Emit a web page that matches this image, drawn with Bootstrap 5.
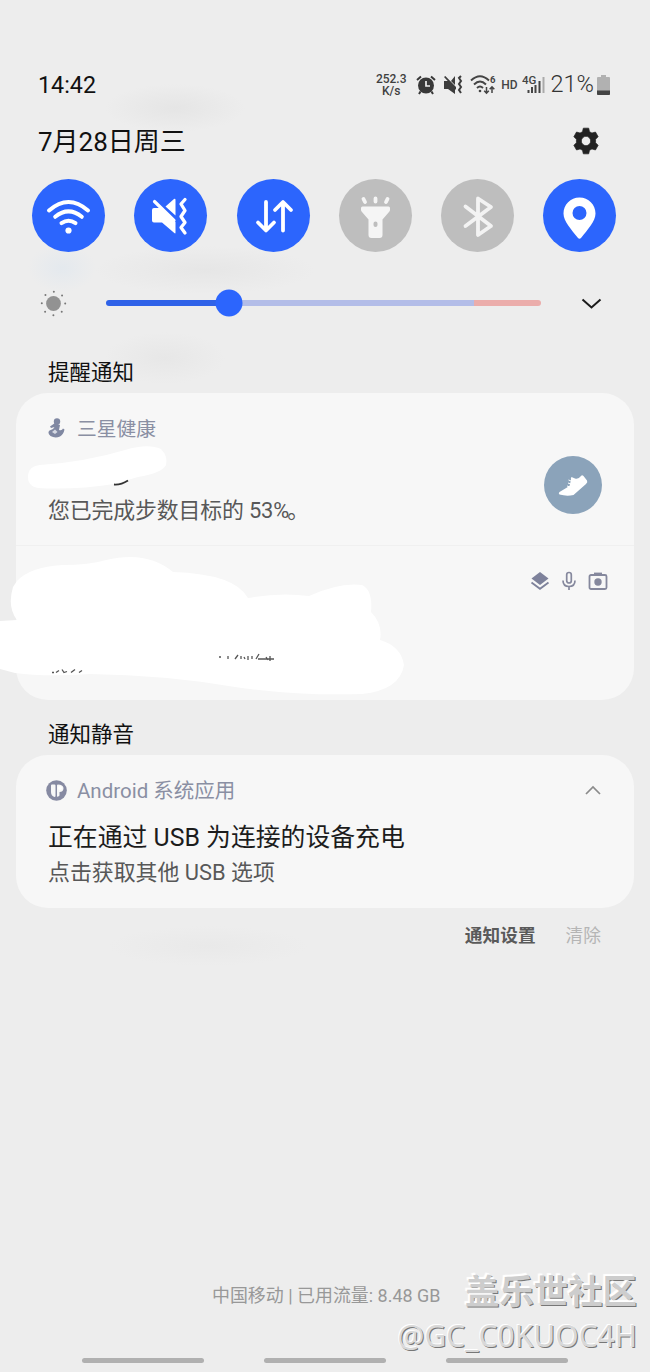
<!DOCTYPE html>
<html lang="zh-CN">
<head>
<meta charset="utf-8">
<meta name="viewport" content="width=device-width, initial-scale=1">
<title>通知面板</title>
<link href="https://cdn.jsdelivr.net/npm/bootstrap@5.3.0/dist/css/bootstrap.min.css" rel="stylesheet">
<style>
body{font-family:Roboto,"Noto Sans CJK SC",sans-serif;background:#ededed;color:#111;line-height:1;white-space:nowrap}
svg{display:block;flex:none}
.shade{width:650px;height:1372px;overflow:hidden;background:
 radial-gradient(ellipse 70px 24px at 175px 108px,#e5e5e5,transparent),
 radial-gradient(ellipse 34px 24px at 62px 268px,#e4e9ee,transparent),
 radial-gradient(ellipse 110px 24px at 205px 270px,#e6e6e6,transparent),
 radial-gradient(ellipse 60px 26px at 165px 358px,#e7e7e7,transparent),
 radial-gradient(ellipse 100px 20px at 208px 946px,#e9e9e9,transparent),#ededed}
.status-row{height:34px;margin-top:68px;padding:0 40px 0 38px}
.clock{font-size:23.3px;padding-top:1px}
.speed{font-size:12px;font-weight:500;line-height:12px;color:#3f3f3f;width:34px;text-align:center}
.hd{font-size:12px;font-weight:500;color:#444}
.pct{font-size:23.5px;font-weight:300;color:#333}
.date-row{height:77px;padding:0 50px 0 38px;font-size:26px}
.toggles{height:73px;padding:0 33.5px 0 32px}
.toggle{width:73px;height:73px;background:#2c65fd;border:0;padding:0}
.toggle.off{background:#bebebe}
.bright-row{height:102px;padding:0 48px 0 40px}
.track{width:435px;height:6px;border-radius:3px;background:linear-gradient(90deg,#2f62e8 123px,#b3bde8 123px 368px,#ebadab 368px)}
.knob{width:27px;height:27px;background:#2c65fd;left:123px;top:50%}
.sect{font-size:21.5px;padding-left:48px}
.panel{margin:0 16px;border-radius:32px;background:#f7f7f7}
.p-one{height:307px}.p-two{height:153px;padding:22px 32px 0}
.row-one{height:153px;padding:22px 32px 0;border-bottom:1px solid #f0f0f0}
.app{color:#8a8fa3;font-size:19.8px;height:26px}
.app-name{padding-top:3px}
.steps{width:58px;height:58px;background:#8ba3ba}
.body-t{font-size:21.9px;color:#585858}
.head-t{font-size:24.85px;color:#1c1c1c}
.scrub{left:-16px;top:0}
.acts{height:54px;padding:3px 49px 0 0;font-size:17.7px}
.foot{margin-top:299px;height:97px}
.carrier{font-size:17.95px;color:#989898;padding:26px 0 0 212px}
.stamp{right:13px;top:7px;text-align:right;color:#d8d8d8;text-shadow:-1px -1px 0 #fff,1px 1px 0 #777}
.stamp-a{font-size:34.4px;font-weight:700;line-height:48px;color:#cdcdcd;text-shadow:-2px -2px 1px #fff,1px 1px 0 #777}
.stamp-b{font-family:"Noto Sans","Noto Sans CJK SC",sans-serif;font-size:30px;line-height:40px}
.grips{padding-left:82px;gap:60px;height:5px}
.grip{width:122px;height:5px;border-radius:3px;background:#b0b0b0}
</style>
</head>
<body>
<main class="shade d-flex flex-column">
 <header class="status-row d-flex align-items-center flex-shrink-0">
  <span class="clock me-auto">14:42</span>
  <span class="speed"><span class="d-block">252.3</span><span class="d-block">K/s</span></span>
  <svg class="ms-2" width="20" height="20" viewBox="0 0 20 20"><path d="M1 5 5 1.5M19 5 15 1.5M4.5 16.5 3 19M15.5 16.5 17 19" stroke="#383838" stroke-width="2"/><circle cx="10" cy="10.5" r="8" fill="#383838"/><path d="M10 6v5h4" fill="none" stroke="#eee" stroke-width="1.7"/></svg>
  <svg style="margin-left:7px" width="20" height="20" viewBox="0 0 20 20" fill="#3c3c3c"><path d="M1 6h4l7 7v6L5 14H1zM12 1v9L8 6zM1 2 2.300 1 13 12v3z"/><path d="m18 1-2 2 2 3-2 3 2 3-2 3 2 3" fill="none" stroke="#3c3c3c" stroke-width="2"/></svg>
  <svg style="margin-left:7px" width="27" height="21" viewBox="0 0 27 21" fill="none" stroke="#444" stroke-width="1.9"><path d="M1 5.500Q10-3 19 5.500M4 9.500q6-6 12 0M7 13q3-3 6 0"/><circle cx="10" cy="16" r="1.300" fill="#444" stroke="none"/><path d="M16.500 12v6m-2.300-2.200 2.300 2.400 2.300-2.400M22 18v-6m-2.300 2.200L22 11.800l2.300 2.400" stroke-width="1.500"/><text x="20" y="8" font-size="9.500" font-weight="700" fill="#444" stroke="none">6</text></svg>
  <span class="hd" style="margin-left:4px">HD</span>
  <svg style="margin-left:4px" width="23" height="22" viewBox="0 0 23 22"><path d="M6.500 19v-3M10 19v-6M13.500 19v-8M17.500 19V7" stroke="#444" stroke-width="2"/><path d="M21.500 19V3" stroke="#aaa" stroke-width="2"/><text x="0" y="9.500" font-size="11.500" font-weight="500" fill="#444">4G</text></svg>
  <span class="pct" style="margin-left:6px">21%</span>
  <svg style="margin-left:3px" width="13" height="20" viewBox="0 0 13 20"><path d="M4 0h5v2h3q1 0 1 1v16q0 1-1 1H1q-1 0-1-1V3q0-1 1-1h3z" fill="#b1b1b1"/><path d="M0 15.500h13V19q0 1-1 1H1q-1 0-1-1z" fill="#444"/></svg>
 </header>
 <div class="date-row d-flex align-items-center justify-content-between flex-shrink-0">
  <span style="padding-top:2px">7月28日周三</span>
  <svg width="28" height="28" viewBox="0 0 24 24" fill="#222"><path fill-rule="evenodd" d="M9.700 1h4.600l.7 3 2.100 1.200 3-.9 2.300 4L20.200 10.500v3l2.200 2.200-2.300 4-3-.9L15 20l-.7 3H9.700L9 20l-2.100-1.200-3 .9-2.300-4 2.200-2.200v-3L1.600 8.300l2.300-4 3 .9L9 4zM12 8a4 4 0 1 0 0 8 4 4 0 0 0 0-8z" stroke="#222" stroke-width=".6" stroke-linejoin="round"/></svg>
 </div>
 <div class="toggles d-flex justify-content-between flex-shrink-0">
  <button class="toggle rounded-circle"><svg width="73" height="73" viewBox="0 0 73 73" fill="none" stroke="#fff" stroke-width="4" stroke-linecap="round"><path d="M17 31.500Q36.500 14.500 56 31.500M23.200 37.800q13.300-10.800 26.600 0M29.500 44.200q7-5 14 0"/><circle cx="36.500" cy="51.500" r="3.100" fill="#fff" stroke="none"/></svg></button>
  <button class="toggle rounded-circle"><svg width="73" height="73" viewBox="0 0 73 73" fill="#fff"><path d="M20 29h7l14.500 14v10.500q0 1.500-1.200.5L28 43.500h-8q-2 0-2-2v-10.500q0-2 2-2zM31.500 27.500l8.500-7.500q1.500-1 1.500 1v15.500z"/><path d="M20.500 22.500 40 41.500" stroke="#fff" stroke-width="3.200" stroke-linecap="round"/><path d="m51 20.500-4 4.500 4 6.500-4 6 4 6-4 5 4 5.500" fill="none" stroke="#fff" stroke-width="3.300" stroke-linecap="round" stroke-linejoin="round"/></svg></button>
  <button class="toggle rounded-circle"><svg width="73" height="73" viewBox="0 0 73 73" fill="none" stroke="#fff" stroke-width="3.800" stroke-linecap="round" stroke-linejoin="round"><path d="M29 23v28M21 43.500l8 8 8-8M46 51.500V23.500M38 31l8-8 8 8"/></svg></button>
  <button class="toggle off rounded-circle"><svg width="73" height="73" viewBox="0 0 73 73" fill="#f5f5f5"><path d="m24.500 20 1.500 3M36.500 19.500v3M48.500 20 47 23" stroke="#f5f5f5" stroke-width="3.800" stroke-linecap="round"/><path fill-rule="evenodd" d="M23.500 27.500h26q1.500 0 1.500 1.500v2q0 1-1 2l-6.500 7.500V56q0 3-3 3h-8q-3 0-3-3V40.500L23 33q-1-1-1-2v-2q0-1.500 1.500-1.500zM36.500 42.500a2 2 0 0 0-2 2v1.500a2 2 0 0 0 4 0v-1.500a2 2 0 0 0-2-2z"/></svg></button>
  <button class="toggle off rounded-circle"><svg width="73" height="73" viewBox="0 0 73 73" fill="none" stroke="#f3f3f3" stroke-width="3.800" stroke-linecap="round" stroke-linejoin="round"><path d="M24.500 27.500 50 47 37 56V19.500l13 8.500-25.500 19"/></svg></button>
  <button class="toggle rounded-circle"><svg width="73" height="73" viewBox="0 0 73 73" fill="#fff"><path fill-rule="evenodd" d="M36.500 18.500c-9 0-16 7-16 16 0 8 8 16 14.300 24.300q1.700 1.800 3.400 0C44.500 50.500 52.500 42.500 52.500 34.500c0-9-7-16-16-16zM36.500 27a7 7 0 1 0 0 14 7 7 0 0 0 0-14z"/></svg></button>
 </div>
 <div class="bright-row d-flex align-items-center justify-content-between flex-shrink-0">
  <svg width="27" height="27" viewBox="-13.500 -13.500 27 27"><circle r="7.400" fill="#929292"/><circle r="11.700" fill="none" stroke="#777" stroke-width="2" stroke-linecap="round" stroke-dasharray="0 9.189"/></svg>
  <div class="track position-relative me-auto" style="margin-left:39px"><span class="knob rounded-circle position-absolute translate-middle"></span></div>
  <svg width="22" height="14" viewBox="0 0 22 14"><path d="m2.500 3.500 9 8 9-8" fill="none" stroke="#1b1b1b" stroke-width="2"/></svg>
 </div>
 <h2 class="sect m-0 fw-normal d-flex align-items-center flex-shrink-0" style="height:39px;padding-bottom:2px">提醒通知</h2>
 <section class="panel p-one position-relative flex-shrink-0">
  <div class="row-one d-flex justify-content-between">
   <div>
    <div class="app d-flex align-items-center"><svg width="17" height="20" viewBox="0 0 17 20" style="margin-right:12px" fill="#8088a2"><circle cx="9" cy="3.500" r="3.200"/><path d="M2 8.500 7 5l5 2-1 5q3 1 4-1.500l1.500 1q-1 5-4.500 7Q7 20.500 2.500 18-1 15 1.500 12.500L5 11l1.500-2-3.500 1z"/><path d="m4 14 3-2.500 2.500 2.500L7 16z" fill="#d5d9e3"/></svg><span class="app-name">三星健康</span></div>
    <div class="body-t" style="margin-top:59px;letter-spacing:-.15px">您已完成步数目标的 53%<span style="margin-left:-2px">。</span></div>
   </div>
   <span class="steps rounded-circle" style="margin-top:41px"><svg width="58" height="58" viewBox="0 0 58 58"><path d="M15.500 36q-1.500 1 0 2.500 7 2 14 .5l12.500-11q2-2 1-3.500L39.500 20q-1.500-1.500-2.500 0-2.500 3.500-6 2.500l-3.500-1.500q-1 1-.5 3l-1.500 6z" fill="#fff"/><path d="m24.500 24 4 1.500M24 27l4 1.500M23 30l3 1" stroke="#fff" stroke-width="1"/></svg></span>
  </div>
  <div class="d-flex justify-content-end" style="padding:24px 26px 0;gap:8px">
   <svg width="20" height="22" viewBox="0 0 20 22"><path d="m10 2 8.500 6.500L10 15 1.500 8.500z" fill="#7e829b"/><path d="m1.500 12.500 8.500 6.300 8.500-6.300" fill="none" stroke="#7e829b" stroke-width="1.800"/></svg>
   <svg width="22" height="22" viewBox="0 0 22 22" fill="none" stroke="#85889d" stroke-width="1.700"><rect x="8.700" y="2.500" width="4.600" height="10.500" rx="2.300"/><path d="M5 10.500q0 6 6 6t6-6M11 16.500V20"/></svg>
   <svg width="20" height="22" viewBox="0 0 20 22" fill="none" stroke="#85889d" stroke-width="1.800"><rect x="1.500" y="5" width="17" height="14" rx="1.500"/><path d="M6 3.500h8"/><circle cx="10" cy="12" r="3.700" fill="#85889d" stroke="none"/></svg>
  </div>
  <svg class="scrub position-absolute" width="650" height="307" viewBox="0 393 650 307">
   <path d="M40 465Q85 462 125 450 148 443 161 449 168 456 166 465 162 473 138 477L114 484Q75 490 38 488 27 486 28 475 29 466 40 465z" fill="#fff"/>
   <path d="M114 484.500q7 .5 14-4" fill="none" stroke="#333" stroke-width="1.800"/>
   <path d="M17 581Q30 567 62 565 90 565 106 560 147 550 173 572 235 574 248 598 280 592 309 596 340 582 362 585 373 590 371 612 383 624 380 640 401 646 404 665 400 690 362 694 300 696 235 687 165 675 90 674 45 677 15 673L0 669V621L17 620Q7 607 13 587z" fill="#fff"/>
   <path d="M52 672.500h2m2 0 3-2m3-1 2 3 3-1m4 1 4-3m4 3 3-2M219 657h2m7-1v3m7 0 3-4m3 1v3m3-2 1 2m3-3v4m4-4v3m4 0 3-5m-1 5h16m-8-2 2 3m2-4v5" fill="none" stroke="#555" stroke-width="1.300"/>
  </svg>
 </section>
 <h2 class="sect m-0 fw-normal d-flex align-items-center flex-shrink-0" style="height:55px;padding-top:14px">通知静音</h2>
 <section class="panel p-two flex-shrink-0">
  <div class="app d-flex align-items-center" style="font-size:20.500px"><svg width="21" height="21" viewBox="0 0 21 21" style="margin:0 10px 0 -2px"><circle cx="10.500" cy="10.500" r="10.300" fill="#868aa2"/><path d="M5 5.500q0-1 1-1h2.500q1 0 1 1v10.500q0 1-1 1Q5 16 5 12zM11 5.500q0-1 1-1 5 0 5.500 3.500 0 4-4 4v3.500q-1 1.500-2.500 1z" fill="#f7f7f7"/><circle cx="14" cy="8" r="2" fill="#fff"/></svg><span class="app-name">Android 系统应用</span>
   <svg class="ms-auto" width="18" height="12" viewBox="0 0 18 12"><path d="m2 10 7-7 7 7" fill="none" stroke="#8b8b8b" stroke-width="1.700"/></svg></div>
  <div class="head-t" style="margin-top:23px">正在通过 USB 为连接的设备充电</div>
  <div class="body-t" style="margin-top:11px">点击获取其他 USB 选项</div>
 </section>
 <div class="acts d-flex align-items-center justify-content-end flex-shrink-0"><span class="fw-bold" style="color:#5a5a5a;margin-right:30px">通知设置</span><span style="color:#b5b5b5">清除</span></div>
 <footer class="foot position-relative flex-shrink-0">
  <div class="carrier">中国移动 | 已用流量: 8.48 GB</div>
  <div class="stamp position-absolute"><div class="stamp-a">盖乐世社区</div><div class="stamp-b">@GC_C0KUOC4H</div></div>
 </footer>
 <div class="grips d-flex flex-shrink-0"><span class="grip"></span><span class="grip"></span><span class="grip"></span></div>
</main>
<script src="https://cdn.jsdelivr.net/npm/bootstrap@5.3.0/dist/js/bootstrap.bundle.min.js"></script>
</body>
</html>
